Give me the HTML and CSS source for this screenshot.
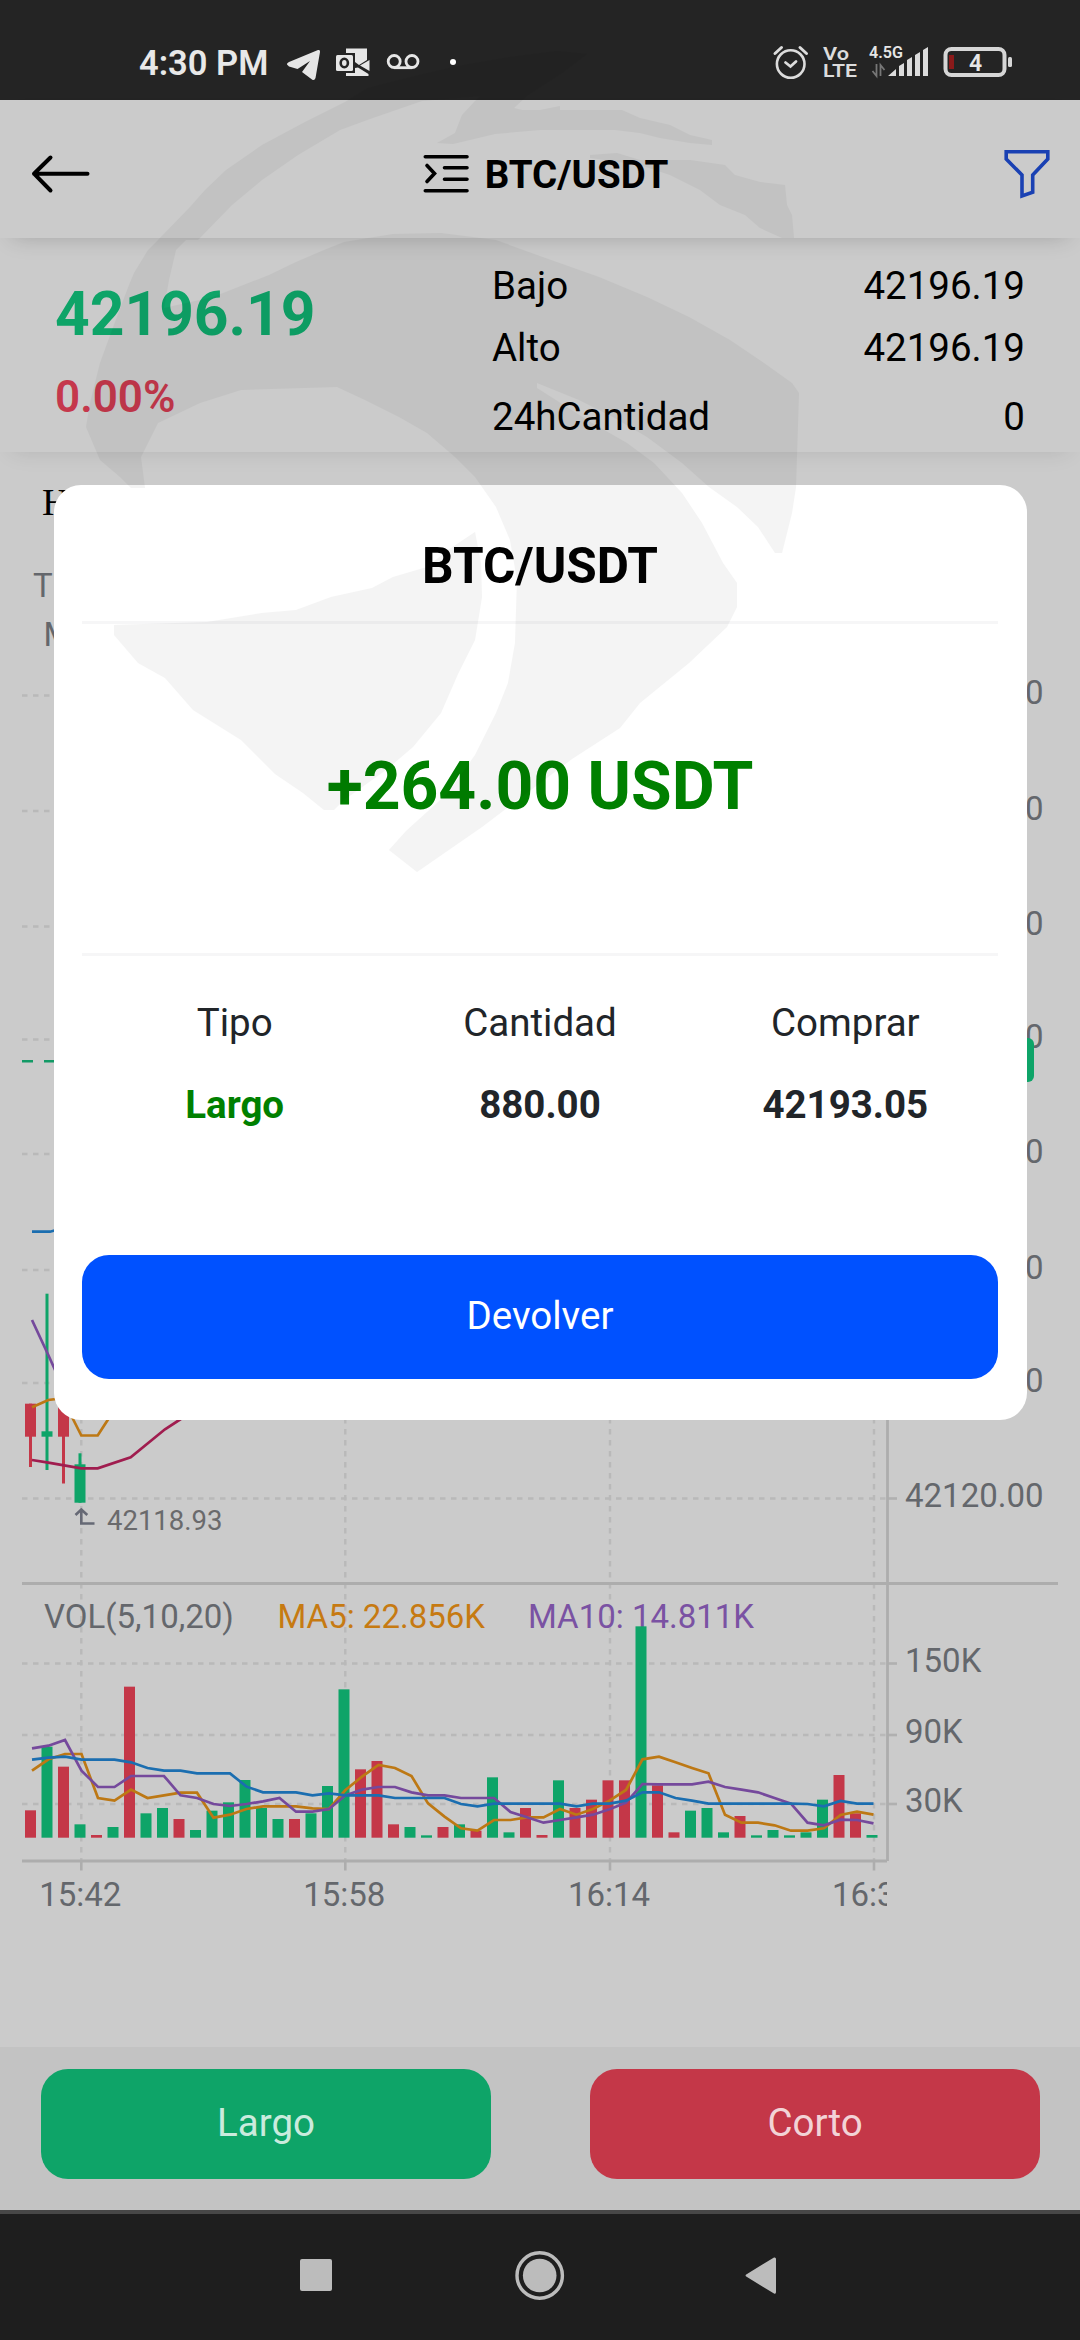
FILE: index.html
```html
<!DOCTYPE html>
<html lang="es">
<head>
<meta charset="utf-8">
<title>BTC/USDT</title>
<link rel="stylesheet" href="styles.css">
</head>
<body>
<div class="screen">
  <div class="status">
    <span class="clock">4:30 PM</span>
    <svg class="status-left" width="190" height="50" viewBox="280 40 190 50">
      <path fill="#e6e6e6" d="M287 64.500Q286.500 63 289 62L318 50Q320.500 49.500 320 52L315.500 78Q314.500 81 312 79.500L302 72L310 61L297.500 69L289 66.500Z"/>
      <path fill="#e6e6e6" d="M346 48.500H367V60L359 65L355 62V53H346Z M346 76V73H355V68L358 67.500L368.500 74V76Z M369.500 60V71L360 65.500Z"/>
      <rect x="336" y="55" width="17" height="16" rx="1.500" fill="#e6e6e6"/>
      <ellipse cx="344.300" cy="63" rx="3.600" ry="4.200" fill="none" stroke="#242424" stroke-width="2.600"/>
      <g fill="none" stroke="#e6e6e6" stroke-width="2.800"><circle cx="394.200" cy="61.500" r="6"/><circle cx="412" cy="61.500" r="6"/><path d="M394 67.700H412"/></g>
      <circle cx="453" cy="62" r="3" fill="#fff"/>
    </svg>
    <svg class="status-right" width="250" height="50" viewBox="770 40 250 50">
      <g fill="none" stroke="#dcdcdc" stroke-linecap="round"><circle cx="790.700" cy="64" r="13.800" stroke-width="2.600"/><path stroke-width="3" d="M775 53.500L781.500 47.500M806.500 53.500L800 47.500"/><path stroke-width="2.800" d="M785.500 62.500L790.500 66.500L796 61.500"/></g>
      <text class="net-label" x="823" y="60" font-size="18.500" textLength="26" lengthAdjust="spacingAndGlyphs">Vo</text>
      <text class="net-label" x="823" y="77" font-size="18.500" textLength="34" lengthAdjust="spacingAndGlyphs">LTE</text>
      <text class="net-gen" x="869" y="57.500" font-size="17" textLength="34" lengthAdjust="spacingAndGlyphs">4.5G</text>
      <path fill="none" stroke="#777" stroke-width="1.800" d="M876.500 64V76L872.500 71M880.500 76V65L884.500 70"/>
      <path fill="#dcdcdc" d="M888 76L896 69V76Z M899 66L904 63V76H899Z M907 60L912 57V76H907Z M915 55L920 52V76H915Z M923 50L928 47V76H923Z"/>
      <rect x="945.500" y="49" width="59" height="26" rx="6" fill="none" stroke="#d6d6d6" stroke-width="4"/>
      <rect x="949" y="55" width="5" height="14" fill="#8b1a1a"/>
      <rect x="1008" y="57" width="4" height="10" rx="1.500" fill="#d6d6d6"/>
      <text class="net-gen" x="969" y="71" font-size="23">4</text>
    </svg>
  </div>

  <header class="topbar">
    <svg class="back" width="64" height="44" viewBox="28 152 64 44"><path fill="none" stroke="#000" stroke-width="4" stroke-linecap="round" stroke-linejoin="round" d="M87.500 173.700H34M50.500 157.500L34 173.700L50.500 190.500"/></svg>
    <div class="pair">
      <svg width="48" height="42" viewBox="420 153 48 42"><path fill="none" stroke="#000" stroke-width="3.600" stroke-linecap="round" d="M423.300 156.700H465M442.500 167.800H465M442.500 179.300H465M423.300 190.800H465M425 165.500L432.500 173.500L425 181.500"/></svg>
      <span class="pair-name">BTC/USDT</span>
    </div>
    <svg class="filter" width="50" height="52" viewBox="1001 147 50 52"><path fill="none" stroke="#1a41b3" stroke-width="3.600" d="M1005.200 150.700H1046.800V158L1031.700 174V191.300L1021 195V174L1005.200 158Z"/></svg>
  </header>

  <section class="ticker">
    <div class="last"><div class="price">42196.19</div><div class="change">0.00%</div></div>
    <dl class="stats">
      <div><dt>Bajo</dt><dd>42196.19</dd></div>
      <div><dt>Alto</dt><dd>42196.19</dd></div>
      <div class="qty"><dt>24hCantidad</dt><dd>0</dd></div>
    </dl>
  </section>

  <main class="chart"><svg id="chart" width="1080" height="1595" viewBox="0 452 1080 1595"></svg></main>

  <footer class="actions">
    <button class="action long">Largo</button>
    <button class="action short">Corto</button>
  </footer>
  <nav class="sysnav">
    <svg width="1080" height="126" viewBox="0 2214 1080 126">
      <g fill="#bcbcbc"><rect x="300" y="2259" width="32" height="32" rx="2"/><circle cx="539.700" cy="2275.500" r="16.800"/><path d="M747 2274L774 2257.500Q776 2257 776 2259V2292Q776 2294.500 774 2293.500L747 2277Q744 2275.500 747 2274Z"/></g>
      <circle cx="539.700" cy="2275.500" r="22.700" fill="none" stroke="#bcbcbc" stroke-width="3.400"/>
    </svg>
  </nav>

  <div class="modal">
    <h1 class="modal-title">BTC/USDT</h1>
    <div class="amount">+264.00 USDT</div>
    <div class="details">
      <span>Tipo</span><span>Cantidad</span><span>Comprar</span>
      <b class="side">Largo</b><b>880.00</b><b>42193.05</b>
    </div>
    <button class="dismiss">Devolver</button>
  </div>

  <svg class="watermark" width="760" height="840" viewBox="60 45 760 840">
    <path d="M129 285L134 273L148 250L158 240L190 207L205 190L226 170L262 145L305 122L345 102L368 88L415 76L458 66L510 57L557 51L587 54L562 73L528 95L514 108L522 110H540L560 106V110H622L640 118L670 125L690 135L712 140V145L690 143L660 138L640 133L615 130H540L495 134L453 144L437 143L455 133L462 115L475 101L480 96L422 101L370 119L340 130L298 155L262 180L232 205L198 240L186 240L176 250L169 280L164 308L213 297L269 275L296 262L324 250L344 242L393 234L441 233L496 240L537 255L599 277L647 297L689 317L730 340L764 363L792 383L799 393L796 487L792 513L782 553L775 553L758 527L737 507L709 487L682 463L647 437L613 417L579 400L537 383L537 388L592 423L627 443L654 463L682 493L702 523L723 563L737 583L737 607L727 627L689 663L640 703L620 728L572 759L482 827L417 872L389 850L406 831L448 793L475 755L496 713L508 683L515 643L517 580L510 540L496 507L475 477L455 457L427 433L399 417L365 400L337 387L241 390L200 403L158 423L141 457L145 488L131 488L120 477L100 460L86 427L90 403L100 363L112 330Z"/>
    <path d="M475 532L448 550L427 567L393 577L372 588L331 597L296 610L262 613L207 622L114 625V635L138 663L165 678L193 710L241 740L275 774L303 793L324 810H334L344 800L386 770L413 747L441 713L458 674L475 640L482 597L481 563Z"/>
    <path d="M590 155L617 153L640 160H690L725 165L735 175L760 182L785 185L787 205L792 215L794 238H782L760 228L745 215L720 205L700 190L670 175L640 165L590 158Z"/>
  </svg>
</div>
<script src="chart.js"></script>
</body>
</html>
```
FILE: styles.css
```css
* { box-sizing: border-box; }
body { margin: 0; background: #cbcbcb; }
.screen {
  position: relative;
  width: 1080px;
  height: 2340px;
  overflow: hidden;
  display: flex;
  flex-direction: column;
  font-family: Roboto, "Liberation Sans", sans-serif;
  font-size: 38.5px;
  color: #000;
  background: #cbcbcb;
}
svg { display: block; flex: none; }
button { font: inherit; border: 0; padding: 0; }

.status {
  height: 100px;
  flex: none;
  display: flex;
  align-items: flex-start;
  padding: 40px 60px 0 139px;
  background: #242424;
}
.clock { width: 141px; font-size: 34.5px; font-weight: 600; line-height: 46px; color: #e8e8e8; white-space: nowrap; }
.status-right { margin-left: auto; }
.net-label { font-weight: 600; fill: #dcdcdc; }
.net-gen { font-weight: 600; fill: #e6e6e6; }

.topbar {
  position: relative;
  z-index: 1;
  height: 138px;
  flex: none;
  display: flex;
  align-items: center;
  justify-content: space-between;
  padding: 9px 28px 0 28px;
  background: #cbcbcb;
  box-shadow: 0 10px 22px -12px rgba(0, 0, 0, .22);
}
.pair { display: flex; align-items: center; gap: 15px; margin-left: -4px; }
.pair-name { font-weight: 700; line-height: 44px; padding-top: 3px; }

.ticker {
  position: relative;
  height: 214px;
  flex: none;
  display: flex;
  justify-content: space-between;
  padding: 0 55px;
  box-shadow: 0 10px 22px -12px rgba(0, 0, 0, .13);
}
.price { font-size: 60.5px; font-weight: 700; line-height: 80px; margin-top: 37px; color: #0ea468; }
.change { font-size: 44px; font-weight: 600; line-height: 60px; margin-top: 12px; color: #c5384c; }
.stats { width: 533px; margin: 0; padding-top: 17px; }
.stats div { display: flex; justify-content: space-between; line-height: 62px; }
.stats .qty { margin-top: 7px; }
.stats dd { margin: 0; }

.chart { height: 1595px; flex: none; }
.chart text { font-size: 33px; fill: #64676c; }
.chart .legend { font-family: "Liberation Serif", serif; font-size: 38.5px; fill: #000; }
.chart .low { font-size: 27.5px; fill: #6a6a6c; }
.chart .ma5 { fill: #c67a12; }
.chart .ma10 { fill: #7a52a3; }

.actions {
  height: 163px;
  flex: none;
  display: flex;
  justify-content: space-between;
  padding: 22px 40px 0 41px;
  background: #c3c3c3;
}
.action { width: 450px; height: 110px; padding-bottom: 3px; border-radius: 27px; color: rgba(255, 255, 255, .8); }
.long { background: #0ea468; }
.short { background: #c43748; }
.sysnav { height: 130px; flex: none; border-top: 4px solid #474747; background: #1e1e1e; }

.modal {
  position: absolute;
  z-index: 2;
  left: 54px;
  top: 485px;
  width: 973px;
  height: 935px;
  display: flex;
  flex-direction: column;
  padding: 0 29px 41px 28px;
  border-radius: 27px;
  background: #fff;
}
.modal-title { margin: 0; height: 139px; padding-top: 51px; font-size: 49.5px; font-weight: 700; line-height: 60px; text-align: center; border-bottom: 3px solid #f6f6f7; }
.amount { height: 332px; padding-bottom: 4px; display: flex; align-items: center; justify-content: center; font-size: 66px; font-weight: 700; color: #008000; border-bottom: 3px solid #f6f6f7; }
.details { display: grid; grid-template-columns: repeat(3, 1fr); padding-top: 26px; line-height: 82px; text-align: center; color: #212529; }
.details b { font-weight: 700; }
.details .side { color: #008000; }
.dismiss { margin-top: auto; height: 124px; padding-bottom: 4px; border-radius: 27px; background: #0051ff; color: #fff; }

.watermark { position: absolute; z-index: 3; left: 60px; top: 45px; fill: #000; opacity: .04; pointer-events: none; }
```
FILE: chart.js
```js
const UP = '#0ea468', DOWN = '#c43748';
const STEP = 16.5, FIRST = 25, BASE = 1837.7;
// One entry per minute: direction, then y of the bar's top in thirds of a pixel below 1560
const volume = 'r751 g560 r620 g793 r825 g801 r380 g760 g744 r777 g810 g752 g727 g660 g744 g777 r777 g760 g678 g388 r628 r603 r793 g801 g826 r801 g793 r812 g652 g817 r744 r825 g661 r744 r719 r661 r661 g199 r676 r817 g752 g744 g817 r768 g826 g810 g826 g817 g719 r645 r760 g825'.split(' ');
const averages = {
  '#bd7814': [632,598,582,582,714,722,689,714,706,698,698,773,764,747,739,739,739,745,747,690,650,615,624,648,730,770,805,812,780,780,772,772,747,764,747,722,690,598,590,607,624,640,764,788,788,796,812,812,805,765,755,764],
  '#75499c': [565,557,540,632,681,681,648,648,648,706,714,732,738,732,724,714,755,755,747,706,689,681,681,697,706,706,714,714,714,756,772,788,780,772,764,748,728,672,673,673,673,665,681,689,697,714,731,788,796,779,780,790],
  '#1b6eb0': [599,593,590,599,599,599,607,624,632,632,640,640,640,680,697,697,697,706,700,706,706,706,714,714,714,714,732,739,731,731,731,731,731,739,731,731,722,697,697,714,722,731,731,731,731,731,731,732,739,723,731,731]
};
const y3 = v => 1560 + v / 3;
let s = '';
const line = (x1, y1, x2, y2, c, w, extra = '') => { s += `<line x1="${x1}" y1="${y1}" x2="${x2}" y2="${y2}" stroke="${c}" stroke-width="${w}" ${extra}/>`; };
const rect = (x, y, w, h, c) => { s += `<rect x="${x}" y="${y}" width="${w}" height="${h}" fill="${c}"/>`; };
const poly = (p, c) => { s += `<polyline points="${p}" fill="none" stroke="${c}" stroke-width="2.7"/>`; };
const text = (x, y, t, cls = '', extra = '') => { s += `<text x="${x}" y="${y}" class="${cls}" ${extra}>${t}</text>`; };

const dash = 'stroke-dasharray="5.5 5.5"';
const priceRows = [695.5, 811, 926.5, 1039.5, 1154, 1270, 1383, 1498.5];
const volRows = [1663.5, 1735, 1804];
[...priceRows, ...volRows].forEach(y => { line(22, y, 887, y, '#b9b9b9', 2.4, dash); line(887, y, 897, y, '#b0b0b0', 2.6); });
const times = [[81.3, '15:42'], [345.3, '15:58'], [610, '16:14'], [874, '16:30']];
times.forEach(([x]) => { line(x, 560, x, 1860, '#b9b9b9', 2.4, dash); line(x, 1861, x, 1870.5, '#adadad', 2.6); });

text(42, 515, 'H', 'legend');
text(33, 596.5, 'T');
text(43.5, 646, 'MA');
priceRows.forEach((y, i) => text(905, y + 8.8, (42260 - i * 20) + '.00'));
text(905, 1672, '150K'); text(905, 1743, '90K'); text(905, 1812, '30K');
text(44, 1628, 'VOL(5,10,20)');
text(277.5, 1628, 'MA5: 22.856K', 'ma5');
text(528, 1628, 'MA10: 14.811K', 'ma10');

// Candles: direction, body top, body bottom, wick top, wick bottom
[['r', 1403.7, 1436.7, 1403.7, 1467], ['g', 1431.3, 1436.7, 1293.7, 1470], ['r', 1403, 1436.7, 1403, 1483.5], ['g', 1464.3, 1502.7, 1453.3, 1502.7]].forEach(([d, a, b, c, e], i) => {
  const k = d === 'r' ? DOWN : UP, x = FIRST + i * STEP;
  rect(x, a, 11, b - a, k);
  rect(x + 4, c, 3, e - c, k);
});
poly('32,1231.7 50,1231.7 60,1229', '#1b6eb0');
poly('32,1320 48.3,1355 60,1381', '#75499c');
poly('32,1407.3 48.3,1400 65,1398 73,1419 81.3,1435.5 97.7,1435.5 109,1418', '#bd7814');
poly('32,1460 48.3,1462.7 81.3,1468.3 97.7,1468.3 130.7,1457.3 165,1429.3 190,1413', '#a01d4f');
line(22, 1061.3, 887, 1061.3, '#139a66', 2.5, 'stroke-dasharray="11 11"');
s += '<path d="M75.5 1515L81.3 1509.5L87.3 1515M81.3 1509.5V1523.5H94.5" fill="none" stroke="#666975" stroke-width="2.6"/>';
text(107, 1530, '42118.93', 'low');
s += `<rect x="897" y="1038" width="137" height="44" rx="6" fill="${UP}"/>`;

volume.forEach((v, i) => { const y = y3(+v.slice(1)); rect(FIRST + i * STEP, y, 11, BASE - y, v[0] === 'r' ? DOWN : UP); });
for (const c in averages) poly(averages[c].map((v, i) => `${32 + i * STEP},${y3(v)}`).join(' '), c);

line(22, 1583.5, 1058, 1583.5, '#adadad', 2.8);
line(22, 1861, 887, 1861, '#adadad', 2.8);
line(887.5, 560, 887.5, 1861, '#adadad', 2.8);
s += '<clipPath id="plot"><rect x="0" y="1862" width="887" height="80"/></clipPath>';
times.forEach(([x, t]) => text(x - 1, 1905.5, t, '', 'text-anchor="middle" clip-path="url(#plot)"'));
document.getElementById('chart').innerHTML = s;
```
